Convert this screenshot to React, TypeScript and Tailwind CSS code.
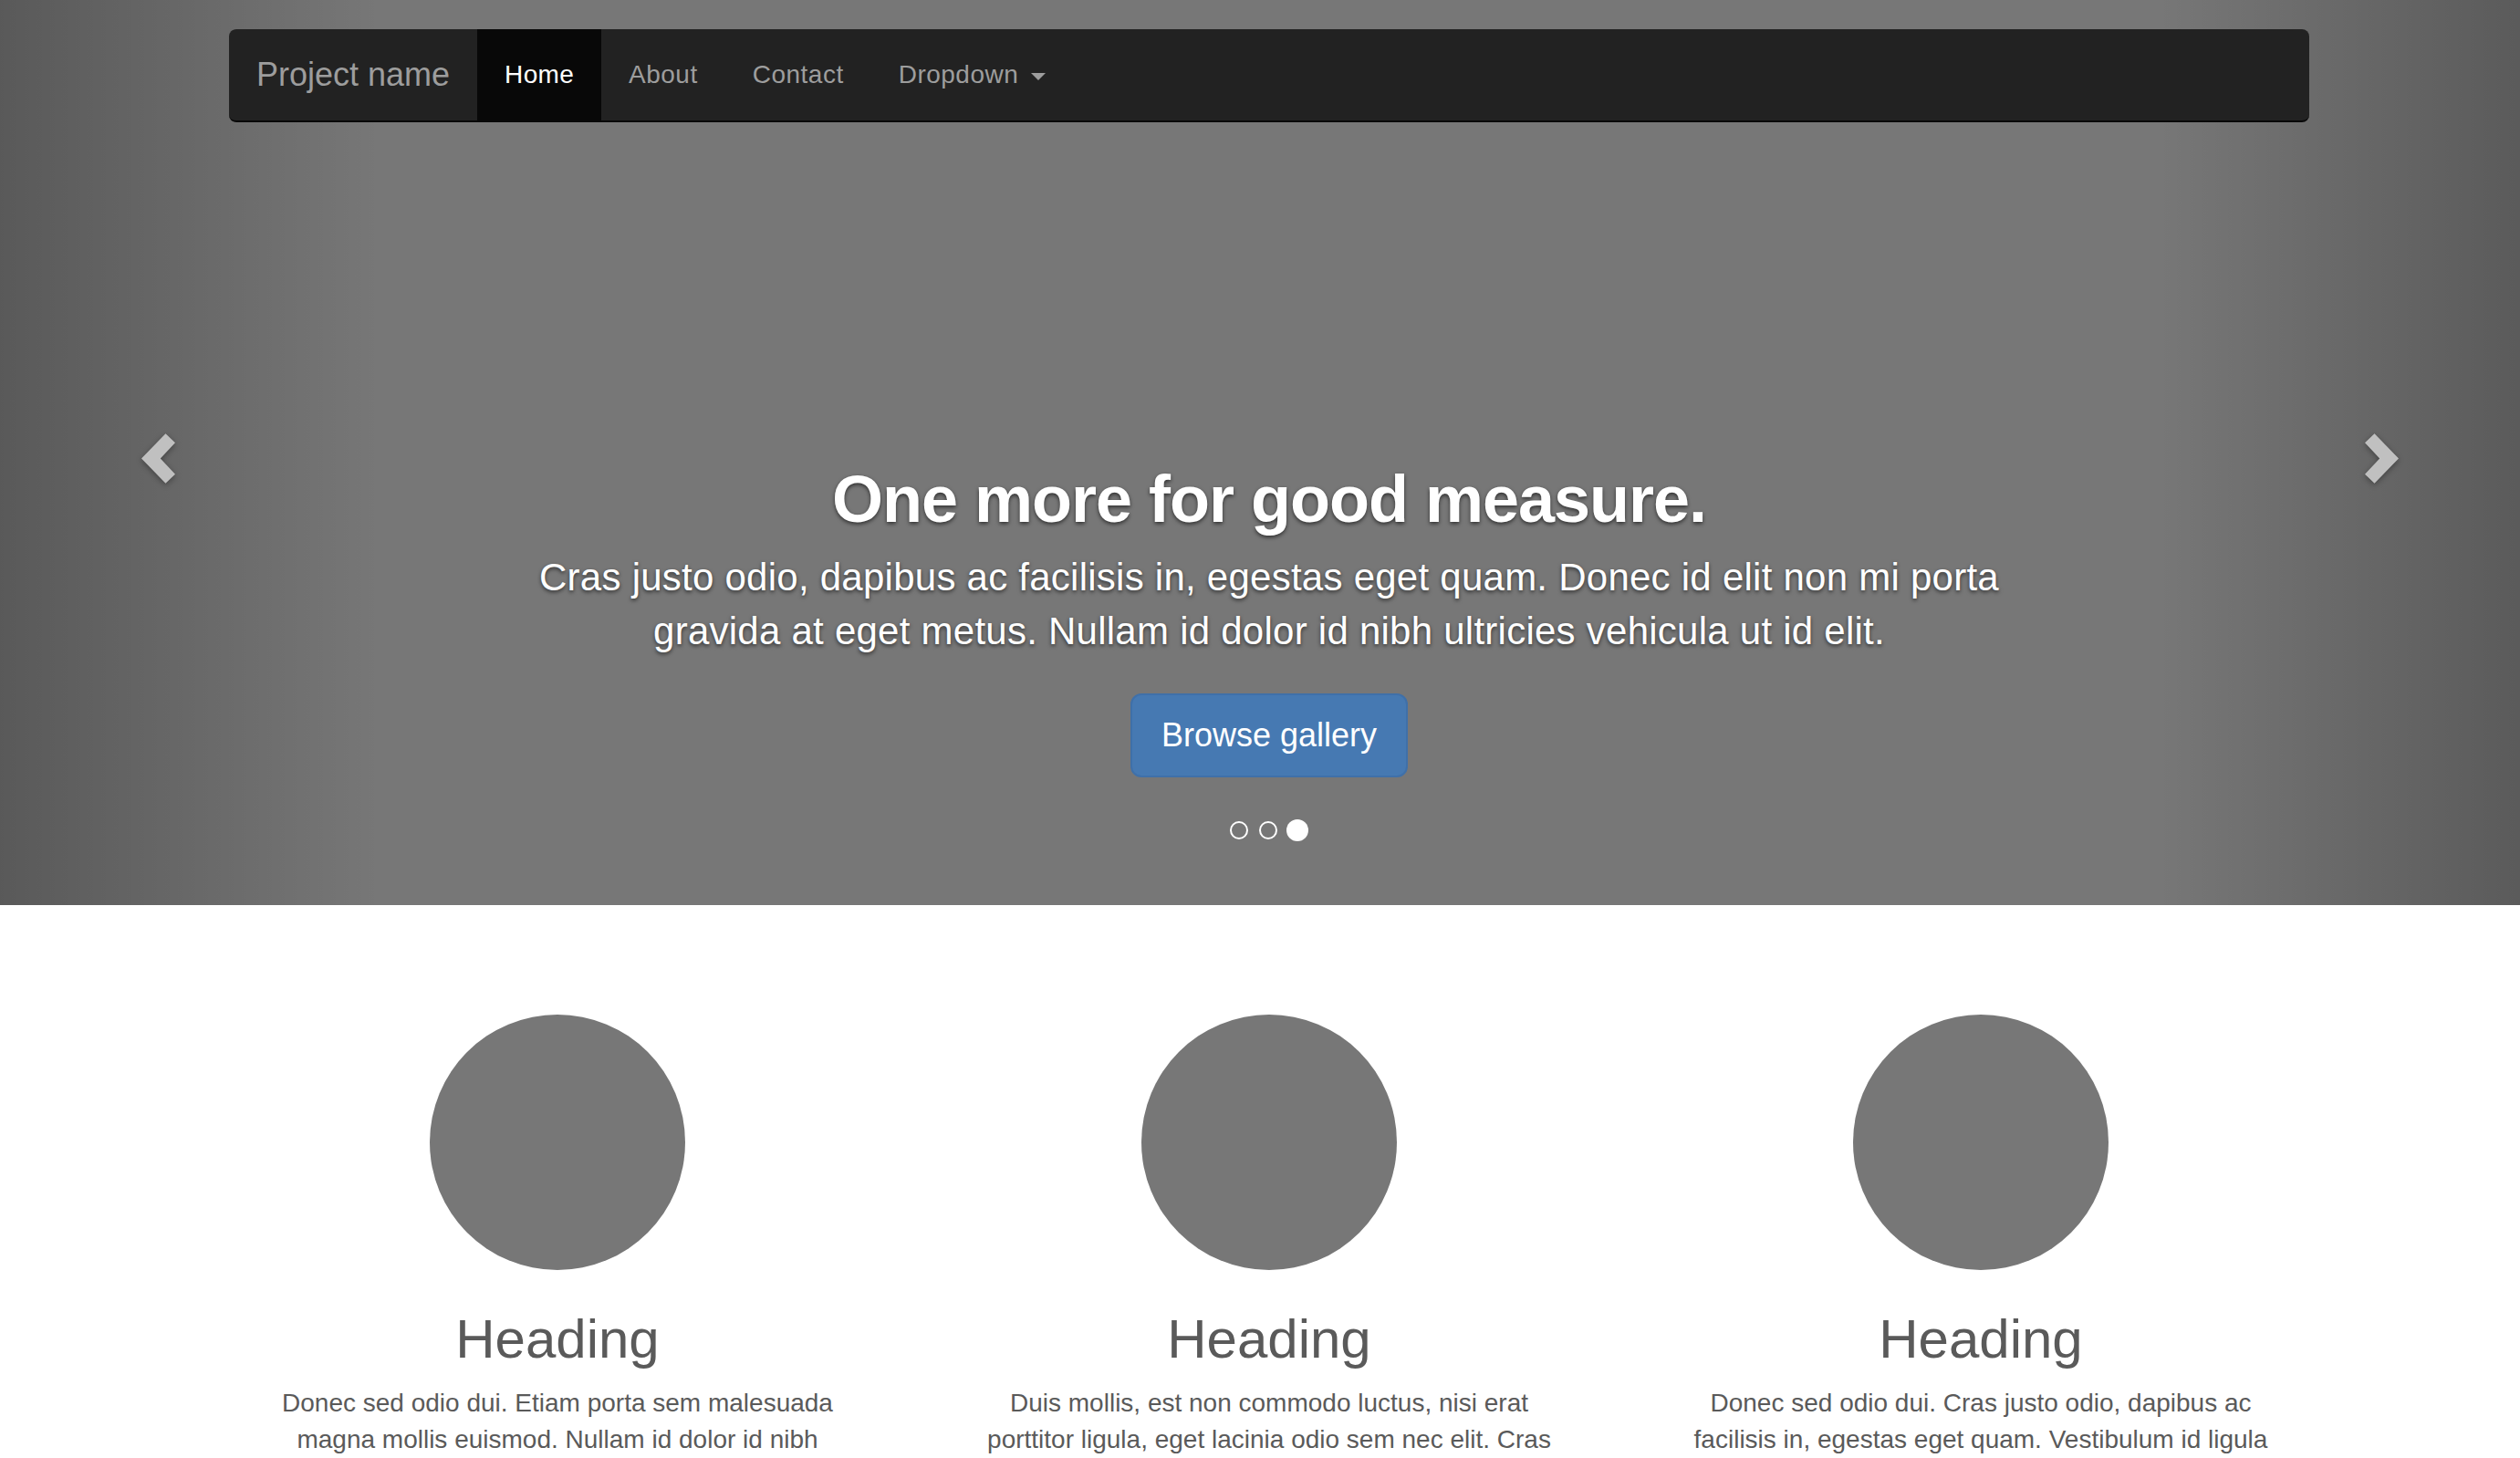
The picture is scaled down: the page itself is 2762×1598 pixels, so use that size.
import React from 'react';

const navLinks = ['About', 'Contact'];

const features = [
  {
    lines: ['Donec sed odio dui. Etiam porta sem malesuada', 'magna mollis euismod. Nullam id dolor id nibh'],
    rest: 'ultricies vehicula ut id elit. Morbi leo risus, porta ac consectetur ac, vestibulum at eros. Praesent commodo cursus magna.',
  },
  {
    lines: ['Duis mollis, est non commodo luctus, nisi erat', 'porttitor ligula, eget lacinia odio sem nec elit. Cras'],
    rest: 'mattis consectetur purus sit amet fermentum. Fusce dapibus, tellus ac cursus commodo, tortor mauris condimentum nibh.',
  },
  {
    lines: ['Donec sed odio dui. Cras justo odio, dapibus ac', 'facilisis in, egestas eget quam. Vestibulum id ligula'],
    rest: 'porta felis euismod semper. Fusce dapibus, tellus ac cursus commodo, tortor mauris condimentum nibh, ut fermentum massa justo sit amet risus.',
  },
];

const Chevron: React.FC<{ dir: 'left' | 'right' }> = ({ dir }) => (
  <svg
    width="37"
    height="55"
    viewBox="0 0 37.3 55"
    className="drop-shadow-[0_2px_3px_rgba(0,0,0,0.35)]"
  >
    <polygon
      fill="#c0c0c0"
      points={
        dir === 'left'
          ? '26.7,0 37.3,10 21,27.5 37.3,45 26.7,55 0,27.5'
          : '10.6,0 37.3,27.5 10.6,55 0,45 16.3,27.5 0,10'
      }
    />
  </svg>
);

const Navbar: React.FC = () => (
  <nav className="relative z-20 mx-auto mt-[32px] flex h-[102px] w-[2280px] rounded-[8px] border-b-2 border-[#080808] bg-[#222]">
    <a className="px-[30px] py-[30px] text-[36px] leading-[40px] text-[#9d9d9d]">Project name</a>
    <ul className="flex tracking-[0.5px]">
      <li className="bg-[#080808] px-[30px] py-[30px] text-[28px] leading-[40px] tracking-[0.3px] text-white">Home</li>
      {navLinks.map((link) => (
        <li key={link} className="px-[30px] py-[30px] text-[28px] leading-[40px] text-[#9d9d9d]">
          {link}
        </li>
      ))}
      <li className="px-[30px] py-[30px] text-[28px] leading-[40px] text-[#9d9d9d]">
        Dropdown
        <svg width="16" height="8" viewBox="0 0 16 8" className="ml-[14px] inline-block align-middle">
          <polygon points="0,0 16,0 8,8" fill="#9d9d9d" />
        </svg>
      </li>
    </ul>
  </nav>
);

const Hero: React.FC = () => (
  <section className="relative flex h-[992px] flex-col justify-between bg-[#777] pb-[70px]">
    {/* Carousel controls */}
    <div className="absolute inset-y-0 left-0 flex w-[15%] items-center justify-center bg-linear-to-r from-black/25 to-black/0 pr-[70px] pt-[13px]">
      <Chevron dir="left" />
    </div>
    <div className="absolute inset-y-0 right-0 flex w-[15%] items-center justify-center bg-linear-to-l from-black/25 to-black/0 pl-[74px] pt-[13px]">
      <Chevron dir="right" />
    </div>

    <Navbar />

    {/* Caption */}
    <div className="relative z-10 mx-auto flex w-[60%] flex-col items-center text-center text-white [text-shadow:0_2px_4px_rgba(0,0,0,0.6)]">
      <h1 className="mb-[17px] text-[72px] font-bold leading-[79px] tracking-[-1px]">One more for good measure.</h1>
      <p className="mb-[38px] text-[42px] leading-[58.8px] tracking-[0.25px]">
        Cras justo odio, dapibus ac facilisis in, egestas eget quam. Donec id elit non mi porta
        <br />
        gravida at eget metus. Nullam id dolor id nibh ultricies vehicula ut id elit.
      </p>
      <button className="rounded-[12px] border-2 border-[#3f70a9] bg-[#4679b2] px-[32px] py-[20px] text-[36px] leading-[48px] text-white">
        Browse gallery
      </button>
      <div className="mt-[46px] flex h-[24px] items-center">
        <span className="mr-[12px] h-[20px] w-[20px] rounded-full border-2 border-white" />
        <span className="mr-[10px] h-[20px] w-[20px] rounded-full border-2 border-white" />
        <span className="h-[24px] w-[24px] rounded-full bg-white" />
      </div>
    </div>
  </section>
);

const Marketing: React.FC = () => (
  <div className="mx-auto mt-[120px] grid w-[2340px] grid-cols-3 text-center text-[#5a5a5a]">
    {features.map((item, i) => (
      <div key={i} className="px-[30px]">
        <div className="mx-auto h-[280px] w-[280px] rounded-full bg-[#777]" />
        <h2 className="mt-[43px] text-[60px] font-normal leading-[66px]">Heading</h2>
        <p className="mx-[20px] mt-[17px] text-[28px] leading-[40px]">
          {item.lines[0]}
          <br />
          {item.lines[1]}
          <br />
          {item.rest}
        </p>
      </div>
    ))}
  </div>
);

const App: React.FC = () => {
  return (
    <div className="h-screen w-full overflow-hidden bg-white font-['Liberation_Sans',Arial,Helvetica,sans-serif]">
      <div className="w-[2782px]">
        <Hero />
        <Marketing />
      </div>
    </div>
  );
};

export default App;
